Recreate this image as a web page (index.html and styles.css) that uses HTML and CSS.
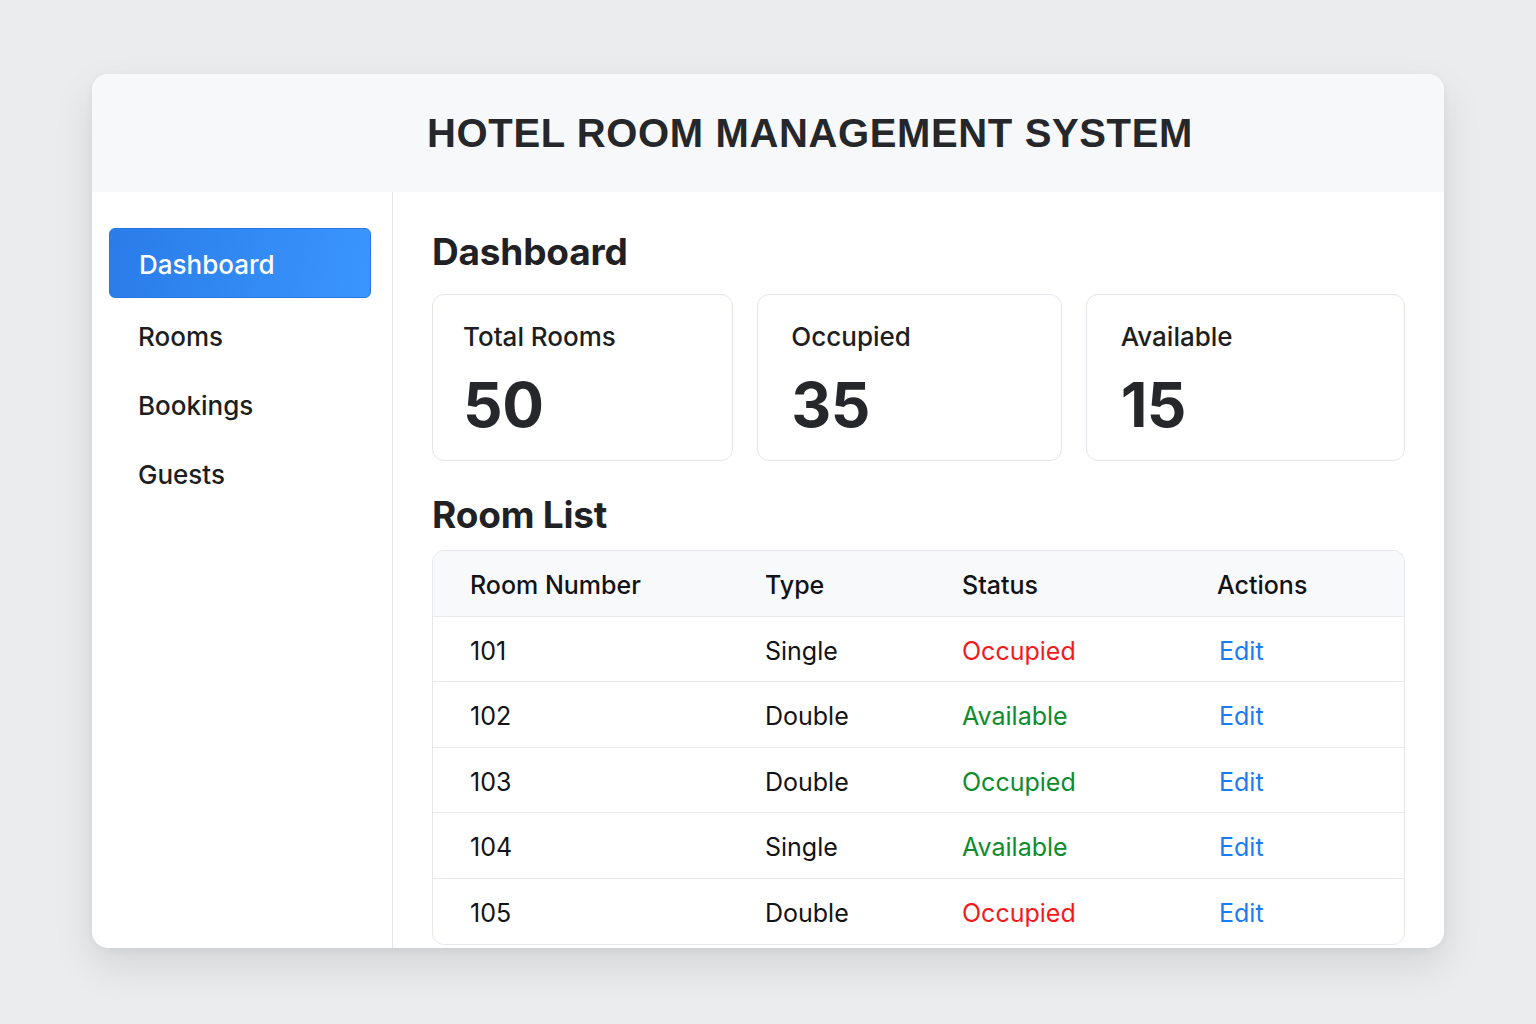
FILE: index.html
```html
<!DOCTYPE html>
<html lang="en">
<head>
<meta charset="utf-8">
<title>Hotel Room Management System</title>
<link rel="stylesheet" href="styles.css">
</head>
<body>
<div class="app">
  <header class="app-header">
    <h1 class="app-title">HOTEL ROOM MANAGEMENT SYSTEM</h1>
  </header>
  <div class="app-body">
    <nav class="sidebar">
      <a class="nav-item active">Dashboard</a>
      <a class="nav-item">Rooms</a>
      <a class="nav-item">Bookings</a>
      <a class="nav-item">Guests</a>
    </nav>
    <main class="main">
      <h2 class="section-title">Dashboard</h2>
      <div class="stats">
        <div class="stat">
          <div class="stat-label">Total Rooms</div>
          <div class="stat-value">50</div>
        </div>
        <div class="stat">
          <div class="stat-label">Occupied</div>
          <div class="stat-value">35</div>
        </div>
        <div class="stat">
          <div class="stat-label">Available</div>
          <div class="stat-value">15</div>
        </div>
      </div>
      <h2 class="section-title list-title">Room List</h2>
      <div class="table-wrap">
        <table class="rooms">
          <thead>
            <tr><th class="c1">Room Number</th><th class="c2">Type</th><th class="c3">Status</th><th class="c4">Actions</th></tr>
          </thead>
          <tbody>
            <tr><td>101</td><td>Single</td><td class="occ">Occupied</td><td class="edit">Edit</td></tr>
            <tr><td>102</td><td>Double</td><td class="avail">Available</td><td class="edit">Edit</td></tr>
            <tr><td>103</td><td>Double</td><td class="avail">Occupied</td><td class="edit">Edit</td></tr>
            <tr><td>104</td><td>Single</td><td class="avail">Available</td><td class="edit">Edit</td></tr>
            <tr><td>105</td><td>Double</td><td class="occ">Occupied</td><td class="edit">Edit</td></tr>
          </tbody>
        </table>
      </div>
    </main>
  </div>
</div>
</body>
</html>
```
FILE: styles.css
```css
* { box-sizing: border-box; }
html, body { margin: 0; padding: 0; }
body {
  background: #ebecee;
  font-family: Inter, "Noto Sans", sans-serif;
  color: #1c1e22;
  width: 1536px;
  height: 1024px;
  overflow: hidden;
}
.app {
  width: 1352px;
  height: 874px;
  margin: 74px 0 0 92px;
  background: #fff;
  border-radius: 16px;
  box-shadow: 0 18px 40px rgba(0,0,0,0.10), 0 2px 8px rgba(0,0,0,0.05);
  display: flex;
  flex-direction: column;
  overflow: hidden;
}
.app-header {
  height: 118px;
  flex: none;
  background: #f7f8fa;
  display: flex;
  align-items: center;
  justify-content: center;
  padding-left: 84px;
}
.app-title {
  margin: 0;
  font-family: "Liberation Sans", Arial, sans-serif;
  font-weight: 700;
  font-size: 40px;
  color: #25272b;
  letter-spacing: 0.63px;
}
.app-body {
  flex: 1;
  display: flex;
  min-height: 0;
}
.sidebar {
  width: 301px;
  flex: none;
  border-right: 1px solid #e6e7eb;
  padding: 36px 21px 0 17px;
  display: flex;
  flex-direction: column;
}
.nav-item {
  display: flex;
  align-items: center;
  height: 69px;
  padding-left: 29px;
  font-size: 26px;
  font-weight: 500;
  color: #1c1e22;
}
.nav-item.active {
  height: 70px;
  padding-top: 3px;
  background: linear-gradient(100deg, #2a7ce9, #3a96fd);
  border: 1px solid #2a75e2;
  border-radius: 6px;
  color: #fff;
  margin-bottom: 4px;
}
.main {
  flex: 1;
  padding: 32px 39px 0 39px;
  min-width: 0;
}
.section-title {
  margin: 0;
  font-size: 37px;
  font-weight: 700;
  color: #1f2125;
  height: 55px;
  line-height: 55px;
  letter-spacing: -0.2px;
}
.stats {
  margin-top: 15px;
  display: grid;
  grid-template-columns: 301fr 304fr 319fr;
  gap: 24px;
}
.stat {
  height: 167px;
  border: 1px solid #e5e6ec;
  border-radius: 12px;
  padding: 26px 30px 0 30px;
}
.stat:nth-child(2) { padding-left: 33px; }
.stat:nth-child(3) { padding-left: 34px; }
.stat-label {
  font-size: 26px;
  font-weight: 500;
  color: #1c1e22;
  line-height: 32px;
}
.stat-value {
  margin-top: 20px;
  font-size: 62px;
  font-weight: 700;
  color: #25272b;
  line-height: 64px;
  letter-spacing: -0.5px;
}
.list-title {
  margin-top: 26px;
}
.table-wrap {
  margin-top: 8px;
  border: 1px solid #e7e8ee;
  border-radius: 12px;
  overflow: hidden;
}
.rooms {
  width: 100%;
  border-collapse: collapse;
  table-layout: fixed;
}
.rooms th, .rooms td {
  text-align: left;
  font-size: 25px;
  color: #121316;
  padding: 4px 0 0 0;
}
.rooms th {
  height: 65px;
  font-weight: 500;
  background: #f8f9fb;
}
.rooms td {
  height: 65.5px;
  font-weight: 400;
  border-top: 1px solid #e9eaf0;
}
.rooms th:first-child, .rooms td:first-child { padding-left: 37px; }
.c1 { width: 332px; }
.c2 { width: 197px; }
.c3 { width: 255px; }
.rooms td.occ { color: #f21b1b; }
.rooms td.avail { color: #0d8c2c; }
.rooms td.edit { color: #1a7cf2; padding-left: 2px; }
```
